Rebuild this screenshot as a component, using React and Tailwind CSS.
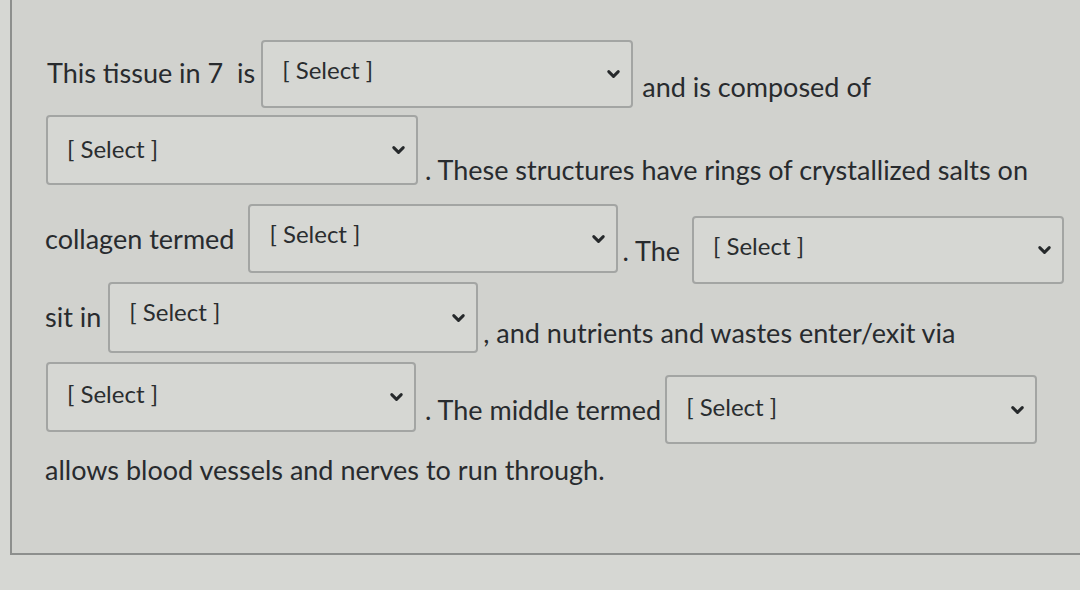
import { ChevronDown } from 'lucide-react';

const Select = ({ className = '', padTop = 'pt-[14px]' }) => (
    <div
        className={`relative shrink-0 h-[68px] rounded border-2 border-[#a3a5a3] bg-[#d6d7d3] pl-[19px] ${padTop} ${className}`}
    >
        <span className="text-[24px] leading-[28px] text-[#2a2d2f]">[ Select ]</span>
        <ChevronDown
            size={19}
            strokeWidth={3.75}
            className="absolute right-[8px] top-1/2 -translate-y-1/2 text-[#26292b]"
        />
    </div>
);

const Text = ({ children, className = '' }) => (
    <span className={`shrink-0 whitespace-nowrap text-[27px] leading-[32px] text-[#282b2e] ${className}`}>
        {children}
    </span>
);

const App = () => {
    return (
        <div
            className="w-[1080px] h-[590px] overflow-hidden bg-[#d6d7d3]"
            style={{ fontFamily: 'Lato, "Open Sans", sans-serif' }}
        >
            <div className="ml-[10px] h-[555px] border-l-2 border-b-2 border-[#8d8f8d] bg-[#d1d2ce] pl-[33px]">
                <div className="pt-[40px] flex items-start">
                    <Text className="ml-[2px] mt-[17px]">This tissue in 7&nbsp; is</Text>
                    <Select className="ml-[6px] w-[372px]" />
                    <Text className="ml-[9px] mt-[31px]">and is composed of</Text>
                </div>

                <div className="mt-[7px] flex items-start">
                    <Select className="ml-[1px] w-[372px] h-[70px]" padTop="pt-[18px]" />
                    <Text className="ml-[7px] mt-[39px]">. These structures have rings of crystallized salts on</Text>
                </div>

                <div className="mt-[18px] flex items-start">
                    <Text className="mt-[19px]">collagen termed</Text>
                    <Select className="ml-[14px] w-[370px] h-[69px]" />
                    <Text className="ml-[4px] mt-[31px]">. The</Text>
                    <Select className="ml-[12px] mt-[12px] w-[372px] h-[67px]" />
                </div>

                <div className="mt-[-2px] flex items-start">
                    <Text className="mt-[19px]">sit in</Text>
                    <Select className="ml-[7px] w-[370px] h-[71px]" />
                    <Text className="ml-[5px] mt-[35px]">, and nutrients and wastes enter/exit via</Text>
                </div>

                <div className="mt-[9px] flex items-start">
                    <Select className="ml-[1px] w-[370px] h-[70px]" padTop="pt-[16px]" />
                    <Text className="ml-[9px] mt-[32px]">. The middle termed</Text>
                    <Select className="ml-[4px] mt-[13px] w-[372px] h-[69px]" padTop="pt-[16px]" />
                </div>

                <div className="mt-[10px] flex items-start">
                    <Text>allows blood vessels and nerves to run through.</Text>
                </div>
            </div>
        </div>
    );
};

export default App;
